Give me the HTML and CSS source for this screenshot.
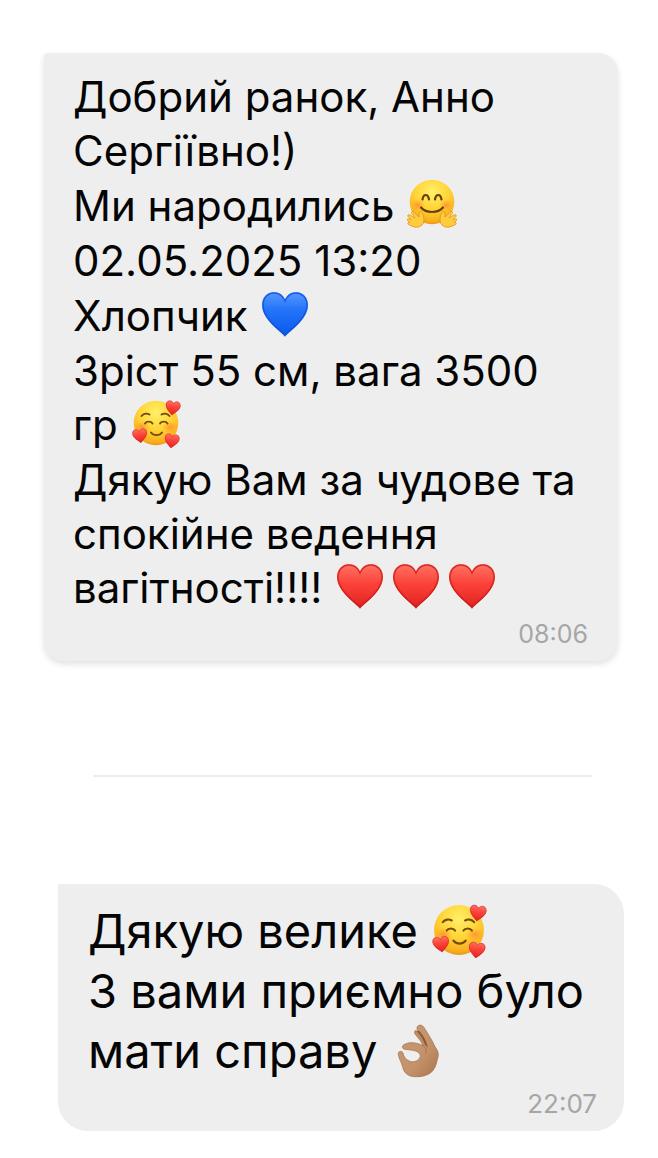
FILE: index.html
```html
<!DOCTYPE html>
<html lang="uk">
<head>
    <meta charset="UTF-8">
    <meta name="viewport" content="width=device-width, initial-scale=1.0">
    <title>Відгуки</title>
    <link rel="stylesheet" href="styles.css">
</head>
<body>
    <!-- emoji -->
    <svg class="sprite" aria-hidden="true">
        <defs>
            <radialGradient id="face" cx="50%" cy="28%" r="75%">
                <stop offset="0" stop-color="#fff06a"/>
                <stop offset="0.5" stop-color="#ffd436"/>
                <stop offset="0.85" stop-color="#f9b01f"/>
                <stop offset="1" stop-color="#e58c12"/>
            </radialGradient>
            <radialGradient id="blush">
                <stop offset="0" stop-color="#ff7a2e" stop-opacity="0.65"/>
                <stop offset="1" stop-color="#ff8a2e" stop-opacity="0"/>
            </radialGradient>
            <linearGradient id="red" x1="0" y1="0" x2="0" y2="1">
                <stop offset="0" stop-color="#ff7464"/>
                <stop offset="0.45" stop-color="#fb4238"/>
                <stop offset="1" stop-color="#e02121"/>
            </linearGradient>
            <linearGradient id="blue" x1="0" y1="0" x2="0" y2="1">
                <stop offset="0" stop-color="#5798ff"/>
                <stop offset="0.4" stop-color="#2374fa"/>
                <stop offset="1" stop-color="#0b57ea"/>
            </linearGradient>
            <linearGradient id="skin" x1="0" y1="0" x2="1" y2="1">
                <stop offset="0" stop-color="#c99872"/>
                <stop offset="0.6" stop-color="#c4926a"/>
                <stop offset="1" stop-color="#a8744e"/>
            </linearGradient>
            <path id="heart-shape" d="M25 47.500C22 43 2 31 2 16C2 8 7.500 3 14 3C19 3 23 6 25 10.500C27 6 31 3 36 3C42.500 3 48 8 48 16C48 31 28 43 25 47.500Z"/>
        </defs>
        <symbol id="heart-red" viewBox="0 0 50 50">
            <use href="#heart-shape" fill="url(#red)"/>
            <path d="M25 46.500C22 42 3 31 3 16C3 8.500 8 4 14 4C19 4 23 7 25 12C27 7 31 4 36 4C42 4 47 8.500 47 16C47 31 28 42 25 46.500Z" fill="none" stroke="#c91a1a" stroke-width="1.500" stroke-opacity="0.75"/>
        </symbol>
        <symbol id="heart-blue" viewBox="0 0 50 50">
            <use href="#heart-shape" fill="url(#blue)"/>
            <path d="M25 46.500C22 42 3 31 3 16C3 8.500 8 4 14 4C19 4 23 7 25 12C27 7 31 4 36 4C42 4 47 8.500 47 16C47 31 28 42 25 46.500Z" fill="none" stroke="#0b4fd8" stroke-width="1.500" stroke-opacity="0.75"/>
        </symbol>
        <symbol id="hug" viewBox="0 0 50 50">
            <circle cx="25" cy="23" r="22.300" fill="url(#face)"/>
            <ellipse cx="11" cy="26" rx="7" ry="6" fill="url(#blush)"/>
            <ellipse cx="39" cy="26" rx="7" ry="6" fill="url(#blush)"/>
            <g fill="none" stroke="#69400d" stroke-width="2.200" stroke-linecap="round">
                <path d="M15.500 20.500C16.500 14.500 21 14.500 22 20.500"/>
                <path d="M28 20.500C29 14.500 33.500 14.500 34.500 20.500"/>
                <path d="M14 28.500C19 34.500 31 34.500 36 28.500"/>
            </g>
            <g id="hug-hand">
                <path d="M1 36C3 35 6 38 8 39C7 36 3 34 5 32.500C7 32 10 37 12 38C12.500 36 11 33 13 32.500C15.500 32.500 17 37 17 41C17 46 12 49 8 48C5 47.500 3 46 1.500 45.500C0 44.500 1 43.500 3 43.500C2 42.500 0 42 0 40.500C0 39.500 2 40 4 40.500C3 39 0 37.500 1 36Z" fill="#ffcc3d" stroke="#e3961a" stroke-width="0.900"/>
            </g>
            <use href="#hug-hand" transform="matrix(-1 0 0 1 50 0)"/>
        </symbol>
        <symbol id="love" viewBox="0 0 50 50">
            <circle cx="25" cy="25" r="22.300" fill="url(#face)"/>
            <ellipse cx="11" cy="29" rx="8" ry="6" fill="url(#blush)"/>
            <ellipse cx="39" cy="29" rx="8" ry="6" fill="url(#blush)"/>
            <g fill="none" stroke="#7a4a0c" stroke-width="1.900" stroke-linecap="round">
                <path d="M10.500 18C12.500 15.500 16 15 18.500 16.500"/>
                <path d="M30.500 16.500C33 15 36.500 15.500 38.500 18"/>
                <path d="M14 25.500C15.500 23 20 23 21.500 25.500"/>
                <path d="M29 25.500C30.500 23 35 23 36.500 25.500"/>
                <path d="M20 34.500C22.500 38 28.500 38 31 34.500"/>
            </g>
            <use href="#heart-red" width="16" height="16" transform="translate(35 1) rotate(8)"/>
            <use href="#heart-red" width="16" height="16" transform="translate(0 31) rotate(-8)"/>
            <use href="#heart-red" width="16" height="16" transform="translate(34 34) rotate(8)"/>
        </symbol>
        <symbol id="ok" viewBox="12 16 170 170">
            <path d="M94 28C88 33 91 39 96 45L87 42C81 44 83 50 87 55C96 66 105 76 109 88C96 80 82 78 68 79C54 82 44 87 47 94C50 101 63 99 77 102C91 104 101 110 101 120C98 132 84 139 72 136C59 132 50 122 49 111C46 103 35 103 34 112C35 127 44 138 47 151C51 171 65 182 84 182C107 183 126 178 139 164C149 152 151 136 155 121C158 108 151 99 146 92C138 73 127 57 117 40C110 27 102 22 94 28Z" fill="url(#skin)" stroke="#9b6a47" stroke-width="2" stroke-linejoin="round"/>
            <path d="M88 43C99 52 108 68 115 84L124 94C120 75 111 57 98 43Z" fill="#84563a"/>
            <path d="M85 43C82 46 84 51 88 56C97 66 105 76 110 88L116 89C111 71 102 55 91 45C89 43 87 42 85 43Z" fill="#bd8862"/>
            <path d="M109 88C117 93 121 101 118 110" fill="none" stroke="#986543" stroke-width="2" stroke-linecap="round"/>
        </symbol>
    </svg>

    <main class="chat">
        <article class="bubble bubble-first">
            <p>Добрий ранок, Анно Сергіївно!)</p>
            <p>Ми народились <svg class="emoji" role="img" aria-label="обійми"><use href="#hug"/></svg></p>
            <p>02.05.2025 13:20</p>
            <p>Хлопчик <svg class="emoji" role="img" aria-label="синє серце"><use href="#heart-blue"/></svg></p>
            <p>Зріст 55 см, вага 3500 <br>гр <svg class="emoji" role="img" aria-label="закоханість"><use href="#love"/></svg></p>
            <p>Дякую Вам за чудове та спокійне ведення вагітності!!!! <span class="hearts"><svg class="emoji" role="img" aria-label="серце"><use href="#heart-red"/></svg><svg class="emoji" role="img" aria-label="серце"><use href="#heart-red"/></svg><svg class="emoji" role="img" aria-label="серце"><use href="#heart-red"/></svg></span></p>
            <time class="time" datetime="08:06">08:06</time>
        </article>

        <hr class="divider">

        <article class="bubble bubble-second">
            <p>Дякую велике <svg class="emoji" role="img" aria-label="закоханість"><use href="#love"/></svg></p>
            <p>З вами приємно було мати справу <svg class="emoji" role="img" aria-label="чудово"><use href="#ok"/></svg></p>
            <time class="time" datetime="22:07">22:07</time>
        </article>
    </main>
</body>
</html>
```
FILE: styles.css
```css
* {
    margin: 0;
    padding: 0;
    box-sizing: border-box;
}

body {
    background: #fff;
    font-family: Inter, "Liberation Sans", sans-serif;
    color: #050505;
}

.sprite {
    display: block;
    width: 0;
    height: 0;
}

.chat {
    display: flex;
    flex-direction: column;
    padding: 53px 34px 28px 44px;
}

.bubble {
    display: flex;
    flex-direction: column;
    background: #eee;
}

.bubble-first {
    gap: 1px;
    margin-right: 6px;
    padding: 17px 24px 11px 29px;
    border-radius: 4px 20px 20px 20px;
    box-shadow: 0 3px 6px rgba(0, 0, 0, 0.12);
    font-size: 42px;
    line-height: 54px;
}

.bubble-second {
    margin-left: 14px;
    padding: 17px 24px 11px 30px;
    border-radius: 0 30px 30px 30px;
    font-size: 47px;
    line-height: 60px;
}

.emoji {
    width: 50px;
    height: 50px;
    margin: -8px 5px -8px 1px;
    overflow: visible;
}

.bubble-second .emoji {
    width: 56px;
    height: 56px;
    margin: -10px 0;
}

.hearts {
    white-space: nowrap;
}

.time {
    align-self: flex-end;
    margin: 2px 6px 0 0;
    color: #a6a6a6;
    font-size: 25px;
    line-height: 32px;
}

.bubble-second .time {
    margin: 7px 3px 0 0;
    font-size: 26px;
}

.divider {
    height: 2px;
    margin: 114px 32px 107px 49px;
    border: 0;
    background: #ececec;
}
```
